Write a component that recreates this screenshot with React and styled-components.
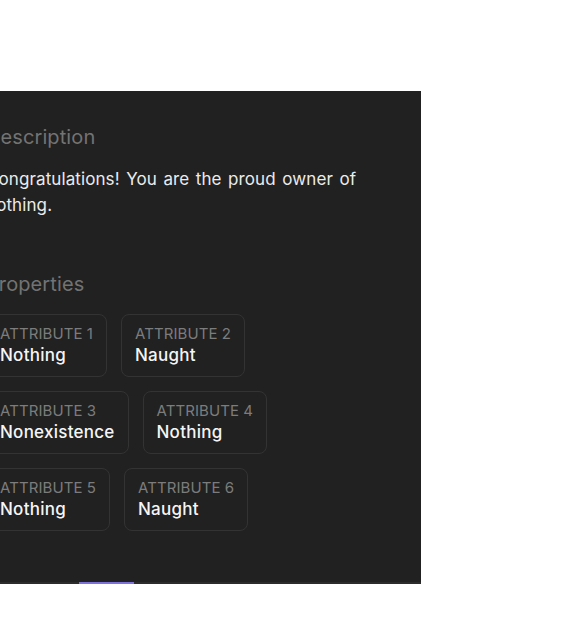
import React from 'react';
import styled, { createGlobalStyle } from 'styled-components';

const GlobalStyle = createGlobalStyle`
  body {
    margin: 0;
    background: #ffffff;
    font-family: Inter, 'Noto Sans', sans-serif;
  }
`;

const Page = styled.div`
  padding-top: 91px;
  width: 586px;
  height: 640px;
  box-sizing: border-box;
`;

const Panel = styled.div`
  width: 421px;
  height: 493px;
  background: #212121;
  display: flex;
  flex-direction: column;
  overflow: hidden;
`;

const Content = styled.div`
  flex: 1;
  margin-left: -14px;
  padding-top: 32px;
`;

const Heading = styled.h2`
  margin: 0;
  font-size: 20px;
  line-height: 28px;
  font-weight: 400;
  letter-spacing: 0.1px;
  color: #737373;
`;

const Body = styled.p`
  margin: 15px 0 0;
  width: 400px;
  font-size: 17px;
  line-height: 26px;
  word-spacing: 1.6px;
  letter-spacing: 0.1px;
  color: #ebebeb;
`;

const Section = styled.section`
  margin-top: ${(p) => p.$gap || 0}px;
`;

const Rows = styled.div`
  display: flex;
  flex-direction: column;
  gap: 14px;
  margin-top: 16px;
`;

const Row = styled.div`
  display: flex;
  gap: 14px;
`;

const Card = styled.div`
  border: 1px solid #333333;
  border-radius: 8px;
  padding: 9px 13px 10px;
  display: flex;
  flex-direction: column;
`;

const Label = styled.span`
  font-size: 15px;
  line-height: 20px;
  letter-spacing: 0.08px;
  color: #7c7c7c;
  text-transform: uppercase;
`;

const Value = styled.span`
  font-size: 17px;
  line-height: 22px;
  letter-spacing: 0.25px;
  color: #f5f5f5;
  font-weight: 500;
`;

const TabStrip = styled.div`
  height: 2px;
  background: #2c2c2c;
  display: flex;
`;

const Indicator = styled.div`
  margin-left: 79px;
  width: 55px;
  background: #7d72da;
`;

const rows = [
  [
    ['Attribute 1', 'Nothing'],
    ['Attribute 2', 'Naught'],
  ],
  [
    ['Attribute 3', 'Nonexistence'],
    ['Attribute 4', 'Nothing'],
  ],
  [
    ['Attribute 5', 'Nothing'],
    ['Attribute 6', 'Naught'],
  ],
];

export default function App() {
  return (
    <Page>
      <GlobalStyle />
      <Panel>
        <Content>
          <Section>
            <Heading>Description</Heading>
            <Body>Congratulations! You are the proud owner of nothing.</Body>
          </Section>
          <Section $gap={52}>
            <Heading>Properties</Heading>
            <Rows>
              {rows.map((row, i) => (
                <Row key={i}>
                  {row.map(([label, value]) => (
                    <Card key={label}>
                      <Label>{label}</Label>
                      <Value>{value}</Value>
                    </Card>
                  ))}
                </Row>
              ))}
            </Rows>
          </Section>
        </Content>
        <TabStrip>
          <Indicator />
        </TabStrip>
      </Panel>
    </Page>
  );
}
